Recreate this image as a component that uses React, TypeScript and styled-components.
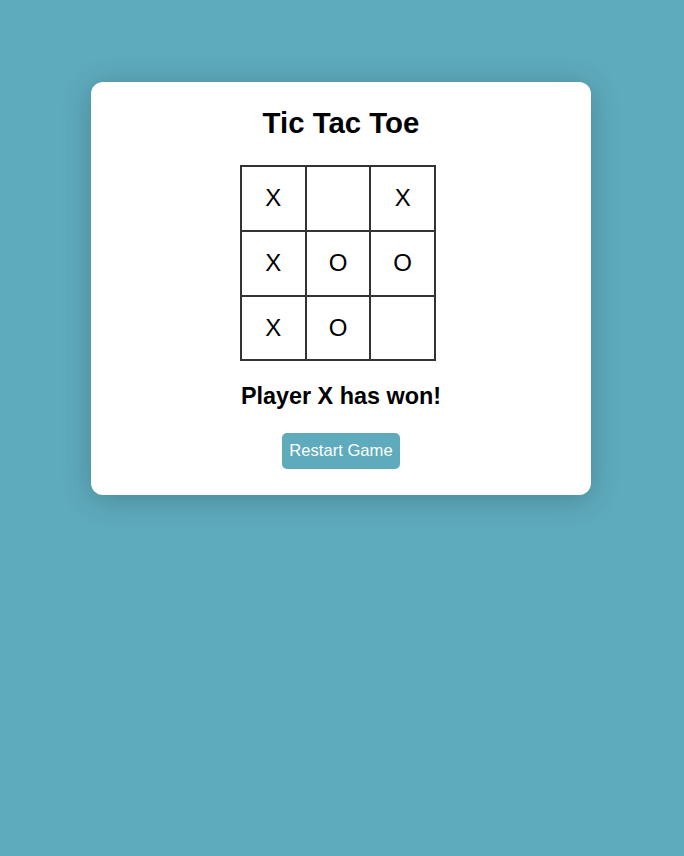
import React from "react";
import styled, { createGlobalStyle } from "styled-components";

const Global = createGlobalStyle`
  html, body { margin: 0; padding: 0; }
  body {
    background: #5eabbd;
    font-family: "Liberation Sans", Arial, sans-serif;
    min-height: 856px;
  }
`;

const Page = styled.div`
  display: flex;
  justify-content: center;
  padding-top: 82px;
  padding-right: 2px;
`;

const Card = styled.div`
  width: 500px;
  box-sizing: border-box;
  background: #fff;
  border-radius: 12px;
  box-shadow: 0 4px 30px rgba(0, 0, 0, 0.22);
  display: flex;
  flex-direction: column;
  align-items: center;
  padding: 25px 0 26px;
`;

const Title = styled.h1`
  margin: 0;
  font-size: 29.4px;
  line-height: 32px;
  font-weight: bold;
  color: #000;
`;

const Board = styled.div`
  margin-top: 26px;
  margin-right: 6px;
  display: grid;
  grid-template-columns: repeat(3, 64.67px);
  border-top: 2px solid #333;
  border-left: 2px solid #333;
`;

const Cell = styled.div`
  height: 62.75px;
  border-right: 2px solid #333;
  border-bottom: 2px solid #333;
  display: flex;
  align-items: center;
  justify-content: center;
  font-size: 24px;
  color: #000;
`;

const Status = styled.h2`
  margin: 22px 0 0;
  font-size: 23.4px;
  line-height: 26px;
  font-weight: bold;
  color: #000;
`;

const Button = styled.button`
  margin-top: 24px;
  height: 36px;
  padding: 0 7px;
  border: none;
  border-radius: 5px;
  background: #5eabbd;
  color: #fff;
  font-family: "Liberation Sans", Arial, sans-serif;
  font-size: 16.6px;
  cursor: pointer;
`;

const cells = ["X", "", "X", "X", "O", "O", "X", "O", ""];

export default function App() {
  return (
    <>
      <Global />
      <Page>
        <Card>
          <Title>Tic Tac Toe</Title>
          <Board>
            {cells.map((c, i) => (
              <Cell key={i}>{c}</Cell>
            ))}
          </Board>
          <Status>Player X has won!</Status>
          <Button>Restart Game</Button>
        </Card>
      </Page>
    </>
  );
}
